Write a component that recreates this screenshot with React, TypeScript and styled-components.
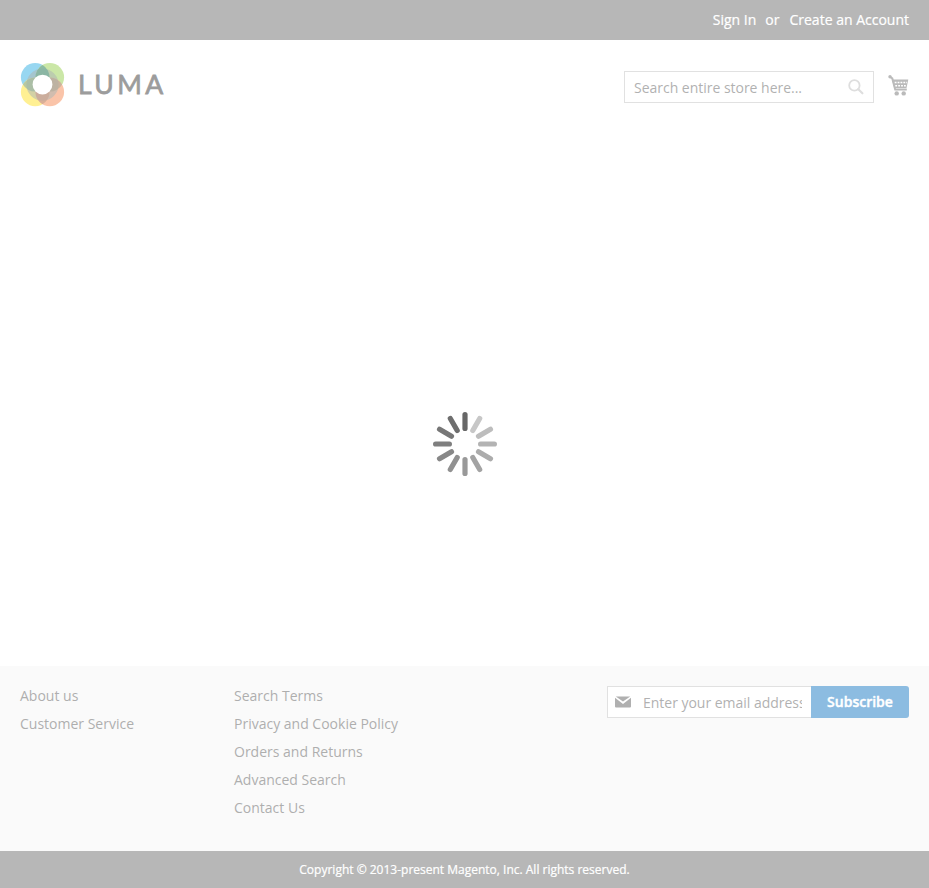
import React from 'react';
import styled, { createGlobalStyle } from 'styled-components';

const GlobalStyle = createGlobalStyle`
  *, *::before, *::after { box-sizing: border-box; }
  body {
    margin: 0;
    background: #fff;
    color: #575757;
    font-family: 'Open Sans', 'Noto Sans', sans-serif;
    font-size: 14px;
    line-height: 20px;
  }
`;

const Page = styled.div`
  position: relative;
  display: flex;
  flex-direction: column;
  height: 888px;
  overflow: hidden;
`;

const TopBar = styled.div`
  display: flex;
  flex: 0 0 40px;
  justify-content: flex-end;
  padding: 10px 20px 0;
  background: #6e6e6e;
  color: #fff;
  -webkit-text-stroke: 0.2px #fff;
`;

const TopLink = styled.a`
  color: #fff;
  text-decoration: none;
`;

const Or = styled.span`
  margin: 0 10px 0 9px;
`;

const Header = styled.header`
  display: flex;
  justify-content: space-between;
  flex: 0 0 84px;
  padding: 23px 20px 0;
`;

const LogoSvg = styled.svg`
  display: block;
  width: 148px;
  height: 44px;
`;

const LogoText = styled.text`
  font-family: Lato, sans-serif;
  font-size: 26.5px;
  font-weight: 400;
`;

const HeaderTools = styled.div`
  display: flex;
  align-items: flex-start;
  padding-top: 8px;
`;

const SearchBox = styled.label`
  display: flex;
  align-items: center;
  width: 250px;
  height: 32px;
  padding: 0 9px;
  border: 1px solid #c2c2c2;
  background: #fff;
`;

const Input = styled.input`
  flex: 1 1 0;
  min-width: 0;
  height: 30px;
  padding: 1px 0 0;
  border: 0;
  outline: 0;
  background: transparent;
  font: 14px/20px 'Open Sans', 'Noto Sans', sans-serif;
  letter-spacing: -0.02px;
  &::placeholder { color: #626262; opacity: 1; }
`;

const SearchIcon = styled.svg`
  width: 16px;
  height: 16px;
  flex: none;
`;

const CartIcon = styled.svg`
  width: 21px;
  height: 22px;
  margin: 4px 0 0 14px;
`;

const Content = styled.main`
  flex: 1 1 auto;
`;

const Footer = styled.footer`
  display: flex;
  flex: 0 0 185px;
  padding: 20px 20px 0;
  background: #f4f4f4;
`;

const LinkColumn = styled.ul<{ $width: number }>`
  width: ${({ $width }) => $width}px;
  margin: 0;
  padding: 0;
  list-style: none;
`;

const LinkItem = styled.li`
  height: 20px;
  margin-bottom: 8px;
`;

const FooterLink = styled.a`
  color: #5c5c5c;
  text-decoration: none;
`;

const Newsletter = styled.form`
  display: flex;
  width: 302px;
  height: 32px;
  margin-left: auto;
`;

const EmailBox = styled.label`
  display: flex;
  align-items: center;
  width: 204px;
  padding: 0 9px 0 7px;
  border: 1px solid #c2c2c2;
  border-right: 0;
  background: #fff;
`;

const MailIcon = styled.svg`
  width: 16px;
  height: 12px;
  margin-right: 12px;
  flex: none;
`;

const SubscribeButton = styled.button`
  width: 98px;
  padding: 0;
  border: 0;
  border-radius: 0 3px 3px 0;
  background: #1979c3;
  color: #fff;
  font: 600 14px/16px 'Open Sans', 'Noto Sans', sans-serif;
  -webkit-text-stroke: 0.4px #fff;
`;

const Copyright = styled.small`
  display: block;
  flex: 0 0 37px;
  padding-top: 10px;
  background: #6e6e6e;
  color: #fff;
  font-size: 12px;
  line-height: 17px;
  text-align: center;
  -webkit-text-stroke: 0.2px #fff;
`;

const LoadingMask = styled.div`
  position: absolute;
  inset: 0;
  display: flex;
  align-items: center;
  justify-content: center;
  background: rgba(255, 255, 255, 0.5);
`;

const Spinner = styled.svg`
  width: 64px;
  height: 64px;
`;

const spokeColors = [
  '#676767', '#c7c7c7', '#bdbdbd', '#b3b3b3', '#acacac', '#a3a3a3',
  '#999999', '#919191', '#888888', '#7f7f7f', '#777777', '#6e6e6e',
];

const accountColumns = [
  { width: 214, links: ['About us', 'Customer Service'] },
  {
    width: 220,
    links: ['Search Terms', 'Privacy and Cookie Policy', 'Orders and Returns', 'Advanced Search', 'Contact Us'],
  },
];

const Logo = () => (
  <LogoSvg viewBox="0 0 148 44" role="img" aria-label="Luma">
    <circle cx="15.2" cy="14.3" r="14.3" fill="#1ba5df" fillOpacity="0.9" />
    <circle cx="29.8" cy="14.3" r="14.3" fill="#8cc93c" fillOpacity="0.9" />
    <circle cx="15.2" cy="28.9" r="14.3" fill="#ffdd10" fillOpacity="0.9" />
    <circle cx="29.8" cy="28.9" r="14.3" fill="#f37435" fillOpacity="0.85" />
    <circle cx="22.5" cy="21.6" r="12.8" fill="none" stroke="#5f7068" strokeOpacity="0.55" strokeWidth="6.6" />
    <path d="M22.5 2a14.3 14.3 0 0 1 0 24.6A14.3 14.3 0 0 1 22.5 2Z" fill="#006243" fillOpacity="0.8" />
    <path d="M2.9 21.6a14.3 14.3 0 0 1 24.6 0A14.3 14.3 0 0 1 2.9 21.6Z" fill="#2f6a50" fillOpacity="0.65" />
    <path d="M17.5 21.6a14.3 14.3 0 0 1 24.6 0a14.3 14.3 0 0 1-24.6 0Z" fill="#6a5a3e" fillOpacity="0.65" />
    <path d="M22.5 16.6a14.3 14.3 0 0 1 0 24.6a14.3 14.3 0 0 1 0-24.6Z" fill="#914a2d" fillOpacity="0.65" />
    <circle cx="22.5" cy="21.6" r="9.9" fill="#fff" />
    <LogoText x="58" y="30.6" fill="#383838" stroke="#383838" strokeWidth="0.8" textLength="85.3" lengthAdjust="spacing">LUMA</LogoText>
  </LogoSvg>
);

export default function App() {
  return (
    <>
      <GlobalStyle />
      <Page>
        <TopBar>
          <TopLink>Sign In</TopLink>
          <Or>or</Or>
          <TopLink>Create an Account</TopLink>
        </TopBar>
        <Header>
          <Logo />
          <HeaderTools>
            <SearchBox>
              <Input placeholder="Search entire store here..." />
              <SearchIcon viewBox="0 0 16 16" fill="none" stroke="#bcbcbc">
                <circle cx="6.4" cy="6.4" r="5.2" strokeWidth="1.8" />
                <path d="m10.3 10.3 4.1 4" strokeWidth="2.2" strokeLinecap="round" />
              </SearchIcon>
            </SearchBox>
            <CartIcon viewBox="0 0 21 22" fill="none" stroke="#757575">
              <circle cx="2" cy="1.8" r="1.7" fill="#757575" stroke="none" />
              <path d="M2 1.8 4.3 3.4 7.2 14.6H18.8" strokeWidth="2" />
              <path d="M4 4.6H20.3L18.5 13H6.2Z" fill="#757575" stroke="none" />
              <path d="M6.7 7.5H19M7.3 10.7H18" stroke="#fff" strokeWidth="1.5" strokeDasharray="1.8 1.1" />
              <circle cx="8.7" cy="18.4" r="2.2" fill="#757575" stroke="none" />
              <circle cx="15.7" cy="18.4" r="2.2" fill="#757575" stroke="none" />
            </CartIcon>
          </HeaderTools>
        </Header>
        <Content />
        <Footer>
          {accountColumns.map((column) => (
            <LinkColumn key={column.links[0]} $width={column.width}>
              {column.links.map((label) => (
                <LinkItem key={label}><FooterLink>{label}</FooterLink></LinkItem>
              ))}
            </LinkColumn>
          ))}
          <Newsletter>
            <EmailBox>
              <MailIcon viewBox="0 0 16 12">
                <path d="M.8.4h14.4L8 5.6Z" fill="#606060" />
                <path d="M0 1.8 8 8l8-6.2V10.6q0 .9-1 .9H1q-1 0-1-.9Z" fill="#606060" />
              </MailIcon>
              <Input placeholder="Enter your email address" />
            </EmailBox>
            <SubscribeButton type="button">Subscribe</SubscribeButton>
          </Newsletter>
        </Footer>
        <Copyright>Copyright © 2013-present Magento, Inc. All rights reserved.</Copyright>
        <LoadingMask>
          <Spinner viewBox="-32 -32 64 64" role="img" aria-label="Loading">
            {spokeColors.map((color, i) => (
              <path key={i} d="M0-29.4V-15.6" stroke={color} strokeWidth="5.2" strokeLinecap="round" transform={`rotate(${i * 30})`} />
            ))}
          </Spinner>
        </LoadingMask>
      </Page>
    </>
  );
}
